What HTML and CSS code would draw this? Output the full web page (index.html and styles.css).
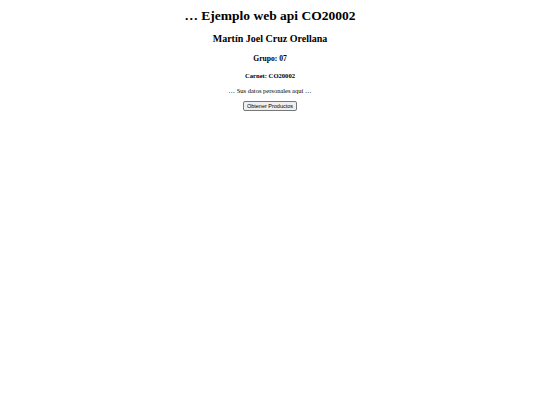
FILE: index.html
```html
<!DOCTYPE html>
<html lang="es">
<head>
<meta charset="utf-8">
<title>Ejemplo web api</title>
<link rel="stylesheet" href="styles.css">
</head>
<body>
<main class="page">
  <h1 class="title">… Ejemplo web api CO20002</h1>
  <h2 class="name">Martín Joel Cruz Orellana</h2>
  <h3 class="group">Grupo: 07</h3>
  <h4 class="carnet">Carnet: CO20002</h4>
  <p class="info">… Sus datos personales aquí …</p>
  <button class="btn" type="button">Obtener Productos</button>
</main>
</body>
</html>
```
FILE: styles.css
```css
html, body {
  margin: 0;
  padding: 0;
  background: #ffffff;
}
.page {
  display: flex;
  flex-direction: column;
  align-items: center;
  font-family: "Liberation Serif", "Times New Roman", serif;
  color: #000000;
  text-align: center;
}
.title {
  margin: 7px 0 0;
  font-size: 13.5px;
  line-height: 18px;
  font-weight: bold;
}
.name {
  margin: 7px 0 0;
  font-size: 10px;
  line-height: 14px;
  font-weight: bold;
}
.group {
  margin: 8px 0 0;
  font-size: 7.6px;
  line-height: 10px;
  font-weight: bold;
}
.carnet {
  margin: 7px 0 0;
  font-size: 6.6px;
  line-height: 9px;
  font-weight: bold;
}
.info {
  margin: 7px 0 0;
  font-size: 6.5px;
  line-height: 8px;
}
.btn {
  margin: 6px 0 0;
  height: 10px;
  padding: 0 3px;
  font-family: "Liberation Sans", Arial, sans-serif;
  font-size: 5.5px;
  line-height: 8px;
  color: #000000;
  background: #efefef;
  border: 1px solid #767676;
  border-radius: 2px;
}
```
